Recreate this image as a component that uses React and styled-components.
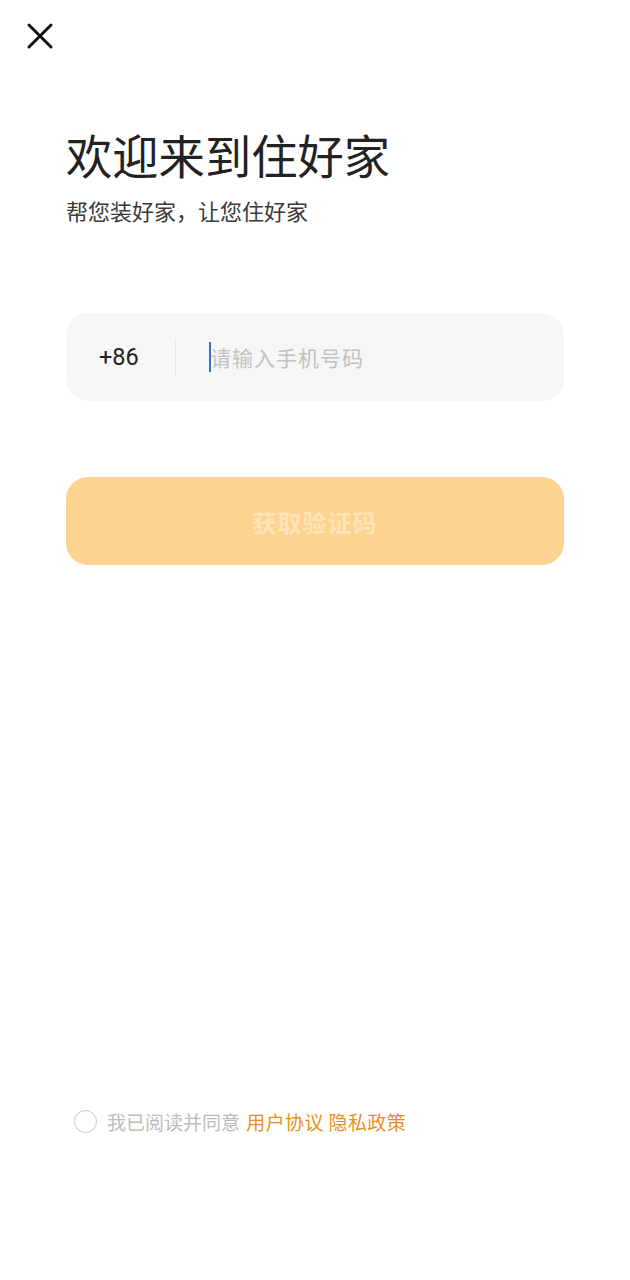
import React from "react";
import styled, { createGlobalStyle } from "styled-components";

const Global = createGlobalStyle`
  html, body { margin: 0; padding: 0; background: #fff; }
  body { font-family: "Noto Sans CJK SC", "Noto Sans", sans-serif; }
  * { box-sizing: border-box; }
`;

const Page = styled.div`
  min-height: 100vh;
  display: flex;
  flex-direction: column;
  padding: 0 66px;
  position: relative;
`;

const CloseBtn = styled.button`
  position: absolute;
  left: 26px;
  top: 22px;
  width: 28px;
  height: 28px;
  padding: 0;
  border: none;
  background: none;
  display: flex;
  align-items: center;
  justify-content: center;
`;

const Title = styled.h1`
  margin: 123px 0 0;
  font-size: 46.3px;
  line-height: 62px;
  font-weight: 400;
  color: #222;
`;

const Subtitle = styled.p`
  margin: 10px 0 0;
  font-size: 22px;
  line-height: 30px;
  color: #3a3a3a;
`;

const InputBox = styled.div`
  margin-top: 88px;
  height: 88px;
  border-radius: 22px;
  background: #f6f6f6;
  display: flex;
  align-items: center;
`;

const Code = styled.span`
  width: 109px;
  padding-left: 33px;
  font-family: Roboto, "Noto Sans", sans-serif;
  font-size: 23.5px;
  color: #222;
`;

const Divider = styled.span`
  width: 1px;
  height: 38px;
  background: #e6e6e6;
`;

const Field = styled.div`
  margin-left: 33px;
  display: flex;
  align-items: center;
`;

const Caret = styled.span`
  width: 2px;
  height: 30px;
  background: #3a6fc4;
  margin-right: -1px;
`;

const Placeholder = styled.span`
  font-size: 21px;
  color: #c2c2c2;
  letter-spacing: 1px;
`;

const SubmitBtn = styled.button`
  margin-top: 76px;
  height: 88px;
  border: none;
  border-radius: 22px;
  background: #fed390;
  color: #ffe4b9;
  font-family: "Noto Sans CJK SC", sans-serif;
  font-size: 24px;
  font-weight: 700;
  letter-spacing: 1px;
`;

const Footer = styled.div`
  margin-top: auto;
  margin-bottom: 145px;
  margin-left: 8px;
  display: flex;
  align-items: center;
  gap: 10px;
  font-size: 19px;
`;

const Radio = styled.span`
  width: 23px;
  height: 23px;
  border-radius: 50%;
  border: 1.5px solid #c8c8c8;
`;

const Agreement = styled.span`
  color: #bcbcbc;
  white-space: pre;
`;

const Link = styled.span`
  color: #e8901c;
  margin-left: 2px;
  letter-spacing: 0.4px;
`;

export default function App() {
  return (
    <>
      <Global />
      <Page>
        <CloseBtn aria-label="close">
          <svg width="28" height="28" viewBox="0 0 28 28">
            <path d="M3 3 L25 25 M25 3 L3 25" stroke="#111" strokeWidth="3" strokeLinecap="round" />
          </svg>
        </CloseBtn>
        <Title>欢迎来到住好家</Title>
        <Subtitle>帮您装好家，让您住好家</Subtitle>
        <InputBox>
          <Code>+86</Code>
          <Divider />
          <Field>
            <Caret />
            <Placeholder>请输入手机号码</Placeholder>
          </Field>
        </InputBox>
        <SubmitBtn>获取验证码</SubmitBtn>
        <Footer>
          <Radio />
          <Agreement>
            我已阅读并同意 <Link>用户协议 隐私政策</Link>
          </Agreement>
        </Footer>
      </Page>
    </>
  );
}
